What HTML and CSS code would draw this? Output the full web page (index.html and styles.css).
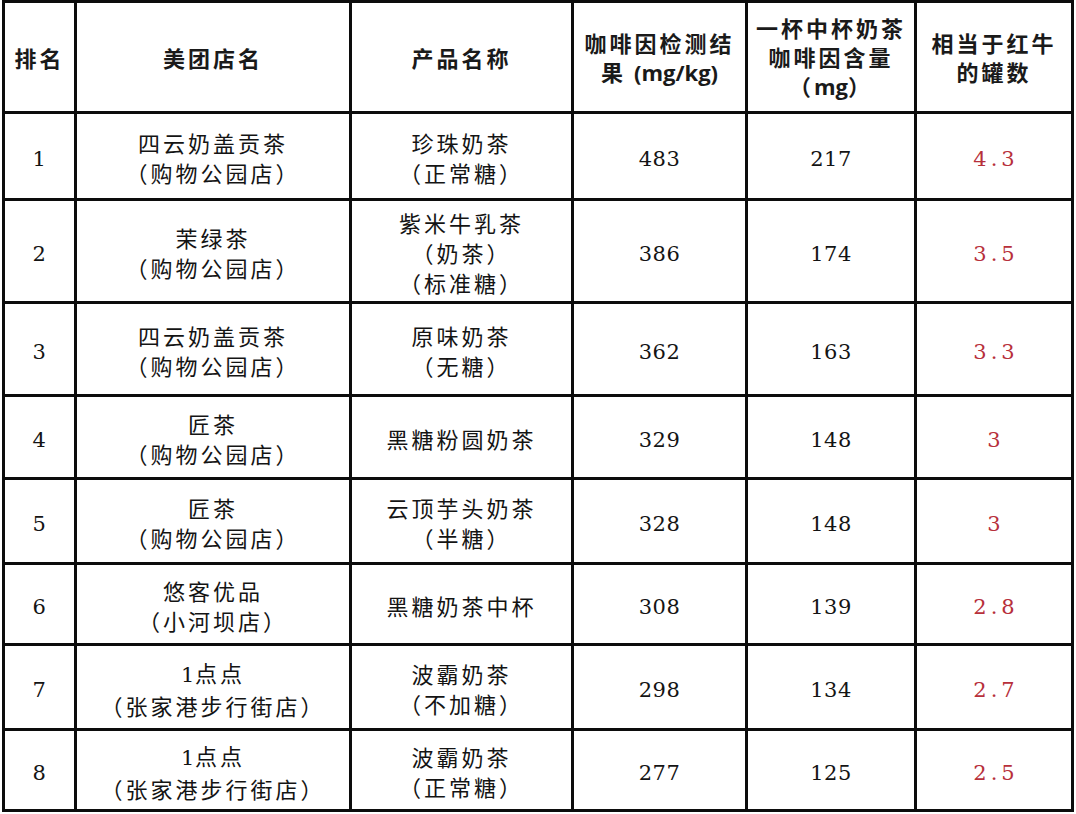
FILE: index.html
```html
<!DOCTYPE html>
<html lang="zh-CN">
<head>
<meta charset="utf-8">
<title>奶茶咖啡因检测</title>
<link rel="stylesheet" href="styles.css">
</head>
<body>
<table class="tbl">
  <colgroup>
    <col class="c1"><col class="c2"><col class="c3"><col class="c4"><col class="c5"><col class="c6">
  </colgroup>
  <thead>
    <tr class="h-head">
      <th>排名</th>
      <th>美团店名</th>
      <th>产品名称</th>
      <th>咖啡因检测结<br>果 <span class="lat">(mg/kg)</span></th>
      <th>一杯中杯奶茶<br>咖啡因含量<br>（<span class="lat">mg</span>）</th>
      <th>相当于红牛<br>的罐数</th>
    </tr>
  </thead>
  <tbody>
    <tr class="r1">
      <td class="num">1</td>
      <td>四云奶盖贡茶<br>（购物公园店）</td>
      <td>珍珠奶茶<br>（正常糖）</td>
      <td class="num">483</td>
      <td class="num">217</td>
      <td class="num red">4.3</td>
    </tr>
    <tr class="r2">
      <td class="num">2</td>
      <td>茉绿茶<br>（购物公园店）</td>
      <td>紫米牛乳茶<br>（奶茶）<br>（标准糖）</td>
      <td class="num">386</td>
      <td class="num">174</td>
      <td class="num red">3.5</td>
    </tr>
    <tr class="r3">
      <td class="num">3</td>
      <td>四云奶盖贡茶<br>（购物公园店）</td>
      <td>原味奶茶<br>（无糖）</td>
      <td class="num">362</td>
      <td class="num">163</td>
      <td class="num red">3.3</td>
    </tr>
    <tr class="r4">
      <td class="num">4</td>
      <td>匠茶<br>（购物公园店）</td>
      <td>黑糖粉圆奶茶</td>
      <td class="num">329</td>
      <td class="num">148</td>
      <td class="num red">3</td>
    </tr>
    <tr class="r5">
      <td class="num">5</td>
      <td>匠茶<br>（购物公园店）</td>
      <td>云顶芋头奶茶<br>（半糖）</td>
      <td class="num">328</td>
      <td class="num">148</td>
      <td class="num red">3</td>
    </tr>
    <tr class="r6">
      <td class="num">6</td>
      <td>悠客优品<br>（小河坝店）</td>
      <td>黑糖奶茶中杯</td>
      <td class="num">308</td>
      <td class="num">139</td>
      <td class="num red">2.8</td>
    </tr>
    <tr class="r7">
      <td class="num">7</td>
      <td><span class="dig">1</span>点点<br>（张家港步行街店）</td>
      <td>波霸奶茶<br>（不加糖）</td>
      <td class="num">298</td>
      <td class="num">134</td>
      <td class="num red">2.7</td>
    </tr>
    <tr class="r8">
      <td class="num">8</td>
      <td><span class="dig">1</span>点点<br>（张家港步行街店）</td>
      <td>波霸奶茶<br>（正常糖）</td>
      <td class="num">277</td>
      <td class="num">125</td>
      <td class="num red">2.5</td>
    </tr>
  </tbody>
</table>
</body>
</html>
```

FILE: styles.css
```css
html, body {
  margin: 0;
  padding: 0;
  background: #ffffff;
}

body {
  padding: 0 0 0 2px;
  font-family: "Noto Sans CJK SC", "Noto Sans", sans-serif;
  color: #141414;
}

.tbl {
  border-collapse: collapse;
  table-layout: fixed;
  width: 1072px;
  margin-top: 0;
}

.c1 { width: 72px; }
.c2 { width: 275px; }
.c3 { width: 222px; }
.c4 { width: 174px; }
.c5 { width: 169px; }
.c6 { width: 157px; }

.tbl th,
.tbl td {
  border: 3px solid #0c0c0c;
  text-align: center;
  vertical-align: middle;
  padding: 0;
  overflow: hidden;
}

.tbl th {
  font-weight: 700;
  font-size: 22px;
  line-height: 29px;
  letter-spacing: 3px;
  color: #1a1a1a;
}

.tbl th .lat {
  font-family: "Open Sans", "Noto Sans", sans-serif;
  font-weight: 700;
  letter-spacing: 0;
}

.tbl td {
  font-size: 22px;
  line-height: 30px;
  letter-spacing: 3px;
  font-weight: 400;
  padding-top: 2px;
}

.tbl td.num {
  font-family: "DejaVu Serif", "Liberation Serif", serif;
  font-size: 21px;
  letter-spacing: 0.5px;
  padding-top: 6px;
}

.tbl td .dig {
  font-family: "DejaVu Serif", "Liberation Serif", serif;
  font-size: 21px;
  letter-spacing: 0.5px;
}

.tbl td.red {
  color: #b7303b;
  letter-spacing: 4px;
  text-indent: 4px;
}

.h-head { height: 111px; }
.r1 { height: 87px; }
.r2 { height: 103px; }
.r3 { height: 93px; }
.r4 { height: 83px; }
.r5 { height: 85px; }
.r6 { height: 81px; }
.r7 { height: 85px; }
.r8 { height: 81px; }
```
